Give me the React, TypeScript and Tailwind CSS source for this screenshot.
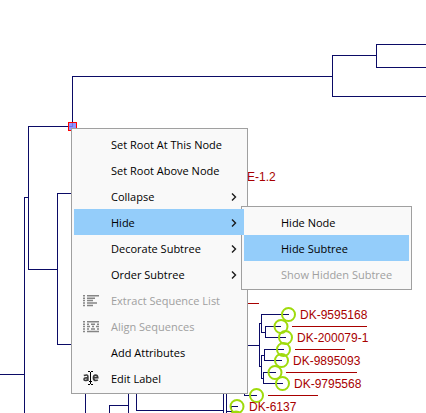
import type { ReactNode } from 'react';
import clsx from 'clsx';

const BRANCHES = [
	'M426 44.5H376.5V67.5H426',
	'M376 55.5H332.5V96.5H426',
	'M332 76.5H72.5V126',
	'M73 126.5H28.5V269.5H57',
	'M28 197.5H24.5V413',
	'M0 374.5H24',
	'M80 193.5H57.5V344.5H80',
	'M85.5 390V413',
	'M128.5 390V413',
	'M128 405.5H109.5V413',
	'M223 410.5H136.5V390',
	'M223.5 390V413',
	'M226.5 390V413',
	'M244.5 390V395.5H257',
	'M238 406.5H231.5V411.5H227',
	'M240 345.5H259',
	'M261 323.5H259.5V366.5H261',
	'M289 314.5H261.5V332.5H265',
	'M281 326.5H265.5V337.5H286',
	'M284 349.5H264.5V360.5H282',
	'M264 355.5H261.5V378.5H263',
	'M276 372.5H263.5V383.5H283',
];

const LEAVES = [
	[288.5, 314.5],
	[281, 326.5],
	[285.5, 337.5],
	[283.5, 349.5],
	[281.5, 360.5],
	[275, 372.5],
	[282.5, 383.5],
	[256.5, 395.5],
	[237, 406.5],
	[236, 418],
];

const COLLAPSED = ['M240 303.5H259', 'M292 326.5H367', 'M295 349.5H345', 'M286 372.5H357', 'M268 395.5H318'];

const LABELS = [
	{ x: 247, y: 181, text: 'E-1.2' },
	{ x: 300, y: 319, text: 'DK-9595168' },
	{ x: 297, y: 342, text: 'DK-200079-1' },
	{ x: 293, y: 365, text: 'DK-9895093' },
	{ x: 294, y: 388, text: 'DK-9795568' },
	{ x: 249, y: 411, text: 'DK-6137' },
];

function PhyloTree() {
	return (
		<svg width="426" height="413" viewBox="0 0 426 413" className="absolute top-0 left-0">
			<path d={BRANCHES.join('')} fill="none" stroke="#0b0b66" shapeRendering="crispEdges" />
			<path d={COLLAPSED.join('')} stroke="#a80000" shapeRendering="crispEdges" />
			{LEAVES.map(([cx, cy]) => (
				<circle key={cy} cx={cx} cy={cy} r="6.5" fill="none" stroke="#9fdb0c" strokeWidth="2" />
			))}
			{LABELS.map((label) => (
				<text key={label.text} x={label.x} y={label.y} className="fill-[#a80000] font-['Liberation_Sans',sans-serif] text-[12px]">
					{label.text}
				</text>
			))}
			{/* Selected node */}
			<rect x="68.5" y="122.5" width="8" height="8" fill="#8080ff" fillOpacity="0.85" stroke="#ff0000" />
		</svg>
	);
}

function ExtractIcon() {
	return (
		<svg width="16" height="12" viewBox="0 0 16 12" fill="none" stroke="#858585" strokeWidth="1.5">
			<path d="M0 .8H2M4 .8H16M0 3.2H2M4 3.2H12M0 5.6H2M4 5.6H10M0 8H2M4 8H14M0 10.4H2M4 10.4H10" />
		</svg>
	);
}

function AlignIcon() {
	return (
		<svg width="16" height="12" viewBox="0 0 16 12" fill="none" stroke="#858585" strokeWidth="1.5">
			<path d="M0 .8H2M4 .8H16M0 3.2H2M4 3.2H6M8 3.2H12M14 3.2H16M0 5.6H2M4 5.6H7M9 5.6H11M13 5.6H16M0 8H2M4 8H6M8 8H12M14 8H16M0 10.4H2M4 10.4H16" />
		</svg>
	);
}

function EditLabelIcon() {
	return (
		<svg width="16" height="16" viewBox="0 0 16 16" fill="none" stroke="#3c3c3c">
			<path d="M.8 4.6Q4.9 3 4.9 5.5V10M4.9 6.9Q1 6.5 1 8.5Q1.2 10.5 4.9 8.7M10.5 6.8H14.8Q14.6 4.1 12.6 4.1Q10.4 4.3 10.4 6.9Q10.5 9.5 12.8 9.5Q14 9.5 14.8 8.9" strokeWidth="1.6" />
			<path d="M5 .5H7M8 .5H10M7.5 1V13M5 13.5H7M8 13.5H10M6 10.5H9" stroke="#000" shapeRendering="crispEdges" />
		</svg>
	);
}

function Arrow() {
	return (
		<svg width="6" height="8" viewBox="0 0 6 8" fill="none" stroke="#1a1a1a" strokeWidth="1.4">
			<path d="M1 .5L4.5 4L1 7.5" />
		</svg>
	);
}

type MenuItemProps = {
	label: string;
	icon?: ReactNode;
	arrow?: boolean;
	active?: boolean;
	disabled?: boolean;
	className?: string;
	children?: ReactNode;
};

function MenuItem({ label, icon, arrow, active, disabled, className, children }: MenuItemProps) {
	return (
		<li role="none" className="relative">
			<button
				type="button"
				role="menuitem"
				disabled={disabled}
				aria-haspopup={arrow ? 'menu' : undefined}
				className={clsx(
					'flex h-[26px] w-full items-center pt-0.5 pr-[7px] text-left whitespace-nowrap',
					active && 'bg-[#94cdfa]',
					disabled ? 'text-[#a0a0a0]' : 'text-black',
					className,
				)}
			>
				<span className="flex w-[37px] shrink-0 pl-[9px]">{icon}</span>
				<span className="flex-1">{label}</span>
				{arrow && <Arrow />}
			</button>
			{children}
		</li>
	);
}

function Menu({ label, className, children }: { label: string; className: string; children: ReactNode }) {
	return (
		<ul role="menu" aria-label={label} className={clsx('absolute border border-[#a0a0a0] bg-[#f9f9f9] p-0.5', className)}>
			{children}
		</ul>
	);
}

export default function App() {
	return (
		<main className="relative min-h-screen overflow-hidden bg-white font-['Open_Sans','Noto_Sans',sans-serif] text-[11px]">
			<PhyloTree />
			<Menu label="Node" className="top-32 left-[71px] w-[177px] pr-[3px]">
				<MenuItem label="Set Root At This Node" />
				<MenuItem label="Set Root Above Node" />
				<MenuItem label="Collapse" arrow />
				{/* The open entry overlaps the left edge of its submenu */}
				<MenuItem label="Hide" arrow active className="relative z-20">
					<Menu label="Hide" className="-top-[3px] left-[167px] z-10 w-[171px]">
						<MenuItem label="Hide Node" />
						<MenuItem label="Hide Subtree" active />
						<MenuItem label="Show Hidden Subtree" disabled />
					</Menu>
				</MenuItem>
				<MenuItem label="Decorate Subtree" arrow />
				<MenuItem label="Order Subtree" arrow />
				<MenuItem label="Extract Sequence List" icon={<ExtractIcon />} disabled />
				<MenuItem label="Align Sequences" icon={<AlignIcon />} disabled />
				<MenuItem label="Add Attributes" />
				<MenuItem label="Edit Label" icon={<EditLabelIcon />} />
			</Menu>
		</main>
	);
}
